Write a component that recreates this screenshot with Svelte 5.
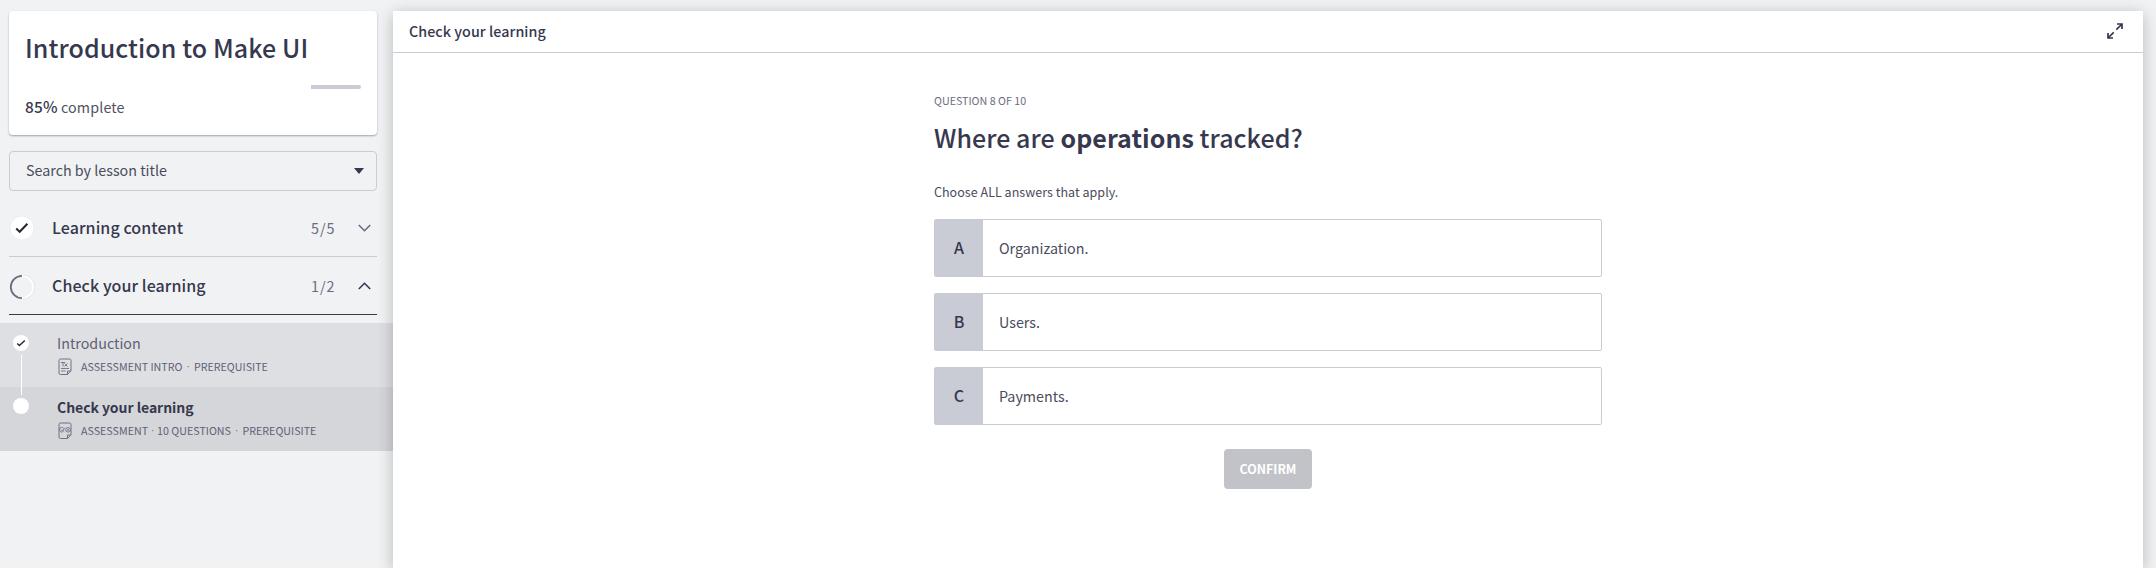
<script>
  const options = [
    { letter: 'A', text: 'Organization.' },
    { letter: 'B', text: 'Users.' },
    { letter: 'C', text: 'Payments.' }
  ];
</script>

<div class="app">
  <aside>
    <section class="course">
      <h1>Introduction to Make UI</h1>
      <div class="progress"><i></i></div>
      <p><b>85%</b> complete</p>
    </section>
    <div class="search">
      <span class="hint">Search by lesson title</span>
      <svg width="10" height="6" viewBox="0 0 10 6"><path d="M0 0h10L5 6z" fill="#36384e" /></svg>
    </div>
    <div class="group">
      <svg class="state" width="26" height="26" viewBox="0 0 26 26"><circle cx="13" cy="13" r="12" fill="#fff" stroke="#e3e4ea" stroke-width=".6" /><path d="M7.2 13.6l3.5 3.2 7.7-8" fill="none" stroke="#26272e" stroke-width="2" /></svg>
      <span class="name">Learning content</span>
      <span class="count">5/5</span>
      <svg class="chevron" width="13" height="8" viewBox="0 0 13 8"><path d="M.8 1l5.7 5.7L12.2 1" fill="none" stroke="#6b6c80" stroke-width="1.6" /></svg>
    </div>
    <div class="group open">
      <svg class="state" width="26" height="26" viewBox="0 0 26 26"><path d="M13 1.8a11.2 11.2 0 0 1 0 22.4" fill="none" stroke="#fff" stroke-width="1.8" /><path d="M14 1a12 12 0 0 1 0 24" fill="none" stroke="#d6d7de" stroke-width=".5" /><path d="M13 1.8a11.2 11.2 0 0 0 0 22.4" fill="none" stroke="#6b6c80" stroke-width="1.8" /></svg>
      <span class="name">Check your learning</span>
      <span class="count">1/2</span>
      <svg class="chevron" width="13" height="8" viewBox="0 0 13 8"><path d="M.8 7l5.7-5.7L12.2 7" fill="none" stroke="#36384e" stroke-width="1.6" /></svg>
    </div>
    <div class="lessons">
      <div class="lesson">
        <span class="dot"><svg width="16" height="16" viewBox="0 0 16 16"><path d="M4.2 8.5l2.2 2L11.8 5.5" fill="none" stroke="#26272e" stroke-width="1.4" /></svg></span>
        <div class="info">
          <span class="title">Introduction</span>
          <span class="meta">
            <svg width="14" height="17" viewBox="0 0 14 17" fill="none" stroke="#6f7083"><path d="M2.5 1h9A1.5 1.5 0 0 1 13 2.5v10.3l-3.5 3.7h-7A1.5 1.5 0 0 1 1 15V2.5A1.5 1.5 0 0 1 2.5 1zM9.5 16.3V13H13" /><path d="M2.8 4.5h4.4M5 4.5v4M6.5 5.5l3 3M9.5 5.5l-3 3M3 10.5h8M3 13h4.5" stroke-width=".9" /></svg>
            <span>ASSESSMENT INTRO</span><i class="sep">·</i><span>PREREQUISITE</span>
          </span>
        </div>
      </div>
      <div class="lesson current">
        <span class="dot"></span>
        <div class="info">
          <span class="title">Check your learning</span>
          <span class="meta">
            <svg width="14" height="17" viewBox="0 0 14 17" fill="none" stroke="#6f7083"><path d="M2.5 1h9A1.5 1.5 0 0 1 13 2.5v10.3l-3.5 3.7h-7A1.5 1.5 0 0 1 1 15V2.5A1.5 1.5 0 0 1 2.5 1zM9.5 16.3V13H13" /><path d="M5.6 6.3A2.3 2.3 0 1 0 6 8.2M3 7.6l1.2 1.2L7 5.8" stroke-width=".9" /><circle cx="10" cy="7.8" r="2.3" stroke-width=".9" /><path d="M9 6.8l2 2M11 6.8l-2 2" stroke-width=".7" /></svg>
            <span>ASSESSMENT</span><i class="sep tight">·</i><span>10 QUESTIONS</span><i class="sep">·</i><span>PREREQUISITE</span>
          </span>
        </div>
      </div>
    </div>
  </aside>
  <main>
    <header>
      <span>Check your learning</span>
      <svg width="16" height="16" viewBox="0 0 16 16" fill="none" stroke="#36384e" stroke-width="1.7"><path d="M9.3 6.7L14.5 1.5M10 1h5v5M6.7 9.3L1.5 14.5M1 10v5h5" /></svg>
    </header>
    <div class="question">
      <div class="eyebrow">QUESTION 8 OF 10</div>
      <h2>Where are <b>operations</b> tracked?</h2>
      <p>Choose ALL answers that apply.</p>
      {#each options as o}
        <div class="option"><span class="letter">{o.letter}</span><span class="answer">{o.text}</span></div>
      {/each}
      <button>CONFIRM</button>
    </div>
  </main>
</div>

<style>
  :global(body) { margin: 0; background: #f1f2f4; overflow: hidden; }
  * { box-sizing: border-box; }
  .app { display: flex; height: 568px; overflow: hidden; background: #f1f2f4; color: #36384e; font-family: "Noto Sans CJK SC", "Noto Sans", sans-serif; font-size: 14.3px; white-space: nowrap; }
  h1, h2, p { margin: 0; font-weight: 500; }
  aside { width: 393px; flex: none; padding-top: 11px; }
  .course { margin: 0 16px 0 9px; height: 124px; padding: 18px 16px 0 16px; background: #fff; border-radius: 4px; box-shadow: 0 1px 2px rgba(40, 42, 60, .4); }
  h1 { font-size: 25px; line-height: 36px; letter-spacing: .08px; }
  .progress { display: flex; justify-content: flex-end; margin-top: 20px; height: 4px; }
  .progress i { width: 50px; background: #c9cbd5; border-radius: 0 2px 2px 0; }
  .course p { margin-top: 7px; line-height: 22px; font-weight: 400; color: #50525f; letter-spacing: .13px; }
  .course b { font-weight: 500; font-size: 15.5px; line-height: 1; color: #36384e; }
  .search { margin: 16px 16px 0 9px; height: 40px; border: 1px solid #c9cbd5; border-radius: 4px; padding: 0 12px 0 16px; display: flex; align-items: center; justify-content: space-between; color: #4a4c5c; }
  .hint { margin-bottom: 3px; }
  .group { margin: 7px 16px 0 9px; height: 59px; display: flex; align-items: center; border-bottom: 1px solid #c9cbd5; padding-right: 6px; }
  .group.open { margin-top: 0; height: 58px; border-color: #36384e; }
  .state { margin-top: 2px; }
  .chevron { margin-top: 1px; }
  .name { margin-left: 17px; flex: 1; font-weight: 500; font-size: 16px; letter-spacing: .08px; }
  .open .name { margin-bottom: 2px; }
  .count { width: 24px; margin-right: 23px; color: #6b6c80; letter-spacing: 1px; }
  .lessons { margin-top: 8px; }
  .lesson { position: relative; height: 64px; background: #dedfe3; display: flex; padding: 10px 0 0 13px; }
  .current { background: #d5d6da; }
  .current::before { content: ""; position: absolute; left: 21px; top: -32px; width: 1px; height: 40px; background: #fff; }
  .dot { width: 16px; height: 16px; margin-top: 2px; border-radius: 50%; background: #fff; }
  .current .dot { margin-top: 1px; }
  .dot svg { display: block; }
  .info { margin-left: 28px; display: flex; flex-direction: column; }
  .title { line-height: 20px; color: #5f6075; }
  .current .title { font-weight: 700; font-size: 14px; letter-spacing: -.05px; color: #36384e; }
  .meta { display: flex; align-items: center; height: 17px; margin-top: 5px; font-size: 10.7px; line-height: 17px; color: #5f6075; }
  .meta svg { margin: 0 9px 0 1px; }
  .sep { width: 11.5px; padding-top: 2px; text-align: center; font-style: normal; font-family: Roboto, sans-serif; }
  .tight { width: 9px; }
  main { width: 1750px; flex: none; margin-top: 11px; height: 557px; background: #fff; box-shadow: 0 3px 15px rgba(0, 0, 0, .24); position: relative; }
  header { height: 42px; border-bottom: 1px solid #c9cbd5; padding: 0 20px 2px 16px; display: flex; align-items: center; justify-content: space-between; font-weight: 500; letter-spacing: .05px; }
  header svg { margin-top: 1px; }
  .question { width: 668px; margin-left: 541px; display: flex; flex-direction: column; }
  .eyebrow { margin-top: 38.5px; height: 18px; line-height: 18px; font-size: 10.7px; color: #6b6c80; }
  h2 { margin-top: 9.5px; height: 36px; line-height: 36px; font-size: 25px; letter-spacing: .06px; }
  .question p { margin: 27px 0 17px; height: 20px; line-height: 20px; font-size: 12.5px; font-weight: 400; color: #4a4c5c; letter-spacing: .03px; }
  .option { height: 58px; margin-bottom: 16px; border: 1px solid #c9cbd5; border-radius: 2px; display: flex; align-items: center; color: #4a4c5c; }
  .letter { width: 48px; height: 56px; padding-bottom: 2px; display: grid; place-items: center; background: #c9cbd5; font-weight: 500; font-size: 16px; color: #36384e; }
  .answer { margin-left: 16px; padding-bottom: 1px; }
  button { margin-top: 8px; width: 88px; height: 40px; align-self: center; border: 0; border-radius: 4px; background: #c2c3c9; color: #fff; font: 700 12.4px "Noto Sans CJK SC", sans-serif; padding: 0; }
</style>
